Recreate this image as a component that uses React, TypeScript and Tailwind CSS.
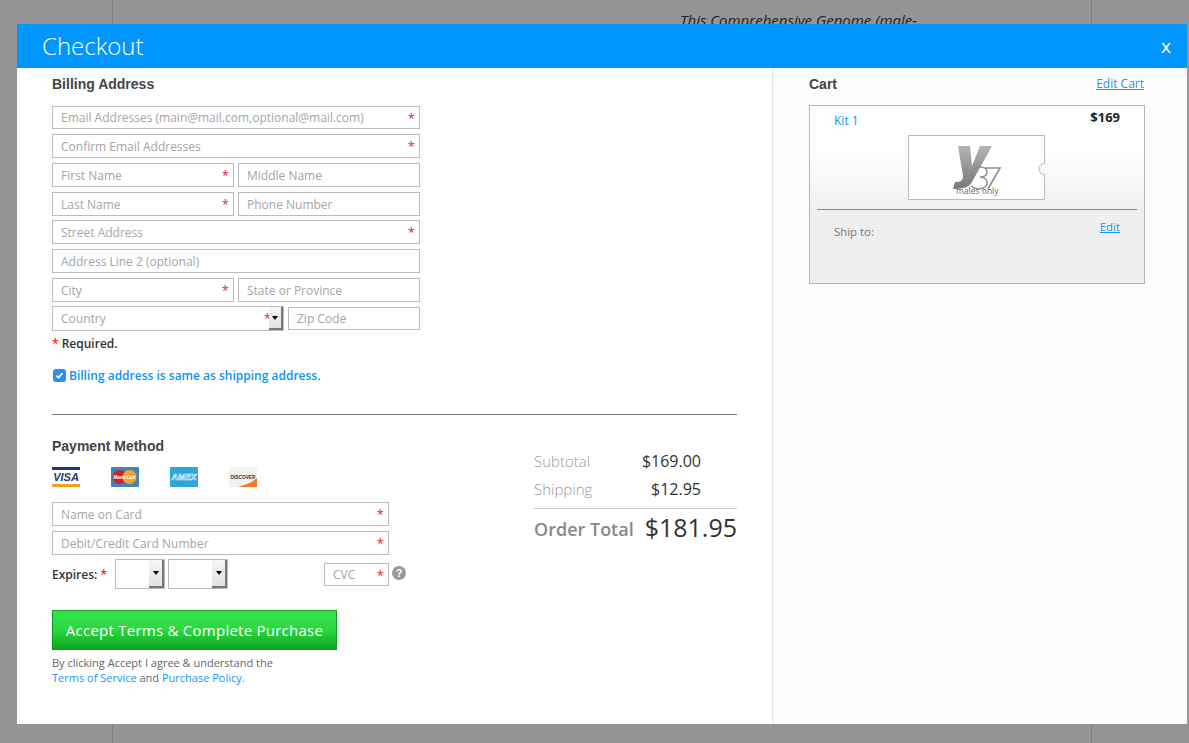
const Field = ({ label, required, className }: { label: string; required?: boolean; className: string }) => {
  return (
    <div className={`relative flex items-center bg-white border border-[#bbb] pl-2 pt-px text-[12px] text-[#a5a5a5] ${className}`}>
      <span className="whitespace-nowrap">{label}</span>
      {required && <span className="absolute right-[4px] top-[2px] text-[13px] leading-[18px] text-[#f02030]">*</span>}
    </div>
  );
};

const SelectArrow = ({ className }: { className: string }) => {
  return (
    <div className={`flex items-center justify-center bg-gradient-to-b from-[#f6f6f6] to-[#e2e2e2] border-r-2 border-b-2 border-[#777] ${className}`}>
      <div className="w-0 h-0 border-x-[3px] border-x-transparent border-t-[4px] border-t-black" />
    </div>
  );
};

const CardIcons = () => {
  return (
    <div className="flex gap-[31px] mt-[13px]">
      <svg width="28" height="20" viewBox="0 0 28 20">
        <rect width="28" height="20" fill="#fff" />
        <rect width="28" height="3" fill="#22347f" />
        <rect y="17" width="28" height="3" fill="#f0a01e" />
        <text x="14" y="14" textAnchor="middle" fontFamily="Liberation Sans" fontSize="11" fontWeight="700" fontStyle="italic" fill="#22347f">VISA</text>
      </svg>
      <svg width="28" height="20" viewBox="0 0 28 20">
        <rect width="28" height="20" rx="1" fill="#3f86b5" />
        <circle cx="8.5" cy="10" r="7" fill="#cf2030" />
        <circle cx="18.5" cy="10" r="7" fill="#f2a42c" />
        <text x="13.5" y="11.5" textAnchor="middle" textLength="22" lengthAdjust="spacingAndGlyphs" fontFamily="Liberation Sans" fontSize="4.6" fontWeight="700" fontStyle="italic" fill="#fff">MasterCard</text>
      </svg>
      <svg width="28" height="20" viewBox="0 0 28 20">
        <rect width="28" height="20" rx="1" fill="#2fa5d8" />
        <text x="14" y="13" textAnchor="middle" textLength="25" lengthAdjust="spacingAndGlyphs" fontFamily="Liberation Sans" fontSize="9" fontWeight="700" fontStyle="italic" fill="#2fa5d8" stroke="#fff" strokeWidth="0.5">AMEX</text>
      </svg>
      <svg width="28" height="20" viewBox="0 0 28 20">
        <rect width="28" height="20" fill="#f2f2f2" />
        <path d="M9 20 C16 18 24 15 28 11 V20 Z" fill="#f07a26" />
        <text x="14" y="12" textAnchor="middle" textLength="25" lengthAdjust="spacingAndGlyphs" fontFamily="Liberation Sans" fontSize="4.8" fontWeight="700" fill="#333">DISCOVER</text>
      </svg>
    </div>
  );
};

const Logo = () => {
  return (
    <div className="relative w-[137px] h-[65px] bg-white border border-[#bbb]">
      <svg className="absolute left-[43px] top-[8px]" width="56" height="48" viewBox="0 0 56 48">
        <defs>
          <linearGradient id="ygrad" x1="0" y1="0" x2="0" y2="1">
            <stop offset="0" stopColor="#b4b4b6" />
            <stop offset="1" stopColor="#77777a" />
          </linearGradient>
        </defs>
        <path d="M6 2 H18 L20 22 L28 2 H40 L20 38 C17 43 12 45 1 45 L3 38 C8 38 11 37 11 32 Z" fill="url(#ygrad)" />
        <path d="M33 24 H48 L36 45" fill="none" stroke="#8f8f92" strokeWidth="1.6" />
        <path d="M21 25 C25 22 35 22 35 28 C35 32 31 33 28 33 C33 33 36 36 35 40 C33 46 23 46 19 42" fill="none" stroke="#8f8f92" strokeWidth="1.5" />
      </svg>
      <span className="absolute left-[47px] top-[49px] text-[8.5px] leading-[12px] text-[#666]">males only</span>
      <svg className="absolute -right-px top-[26px]" width="7" height="14" viewBox="0 0 7 14">
        <path d="M7 1 A6 6 0 0 0 7 13 Z" fill="#f8f8f8" />
        <path d="M7 1 A6 6 0 0 0 7 13" fill="none" stroke="#bbb" />
      </svg>
    </div>
  );
};

const App = () => {
  return (
    <div className="relative w-full h-[743px] overflow-hidden bg-[#959595] font-['Open_Sans',sans-serif]">
      <div className="absolute left-[112px] top-0 w-px h-full bg-[#7f7f7f]" />
      <div className="absolute left-[1091px] top-0 w-px h-full bg-[#7f7f7f]" />
      <p className="absolute left-[680px] top-[9px] text-[15px] italic text-[#222]">This Comprehensive Genome (male-</p>

      <div className="absolute left-[17px] top-[24px] w-[1170px] h-[700px] bg-white flex flex-col">
        <div className="relative shrink-0 h-[44px] bg-[#0096ff] flex items-center justify-between pl-[25px] pr-[16px] text-white">
          <span className="text-[24px] font-light">Checkout</span>
          <span className="text-[19px] leading-none">x</span>
        </div>

        <div className="flex flex-1 min-h-0">
          <div className="w-[756px] pl-[35px] pr-[35px] border-r border-[#e4e4e4]">
            <h2 className="mt-[8px] text-[14px] leading-[16px] font-bold text-[#444] font-['Liberation_Sans',sans-serif]">Billing Address</h2>

            <div className="mt-[14px] w-[368px] flex flex-col gap-[5px]">
              <Field label="Email Addresses (main@mail.com,optional@mail.com)" required className="h-[23px]" />
              <Field label="Confirm Email Addresses" required className="h-[24px]" />
              <div className="flex gap-[4px]">
                <Field label="First Name" required className="w-[182px] h-[24px]" />
                <Field label="Middle Name" className="w-[182px] h-[24px]" />
              </div>
              <div className="flex gap-[4px] mb-[-1px]">
                <Field label="Last Name" required className="w-[182px] h-[24px]" />
                <Field label="Phone Number" className="w-[182px] h-[24px]" />
              </div>
              <Field label="Street Address" required className="h-[24px]" />
              <Field label="Address Line 2 (optional)" className="h-[24px]" />
              <div className="flex gap-[4px] mb-[-1px]">
                <Field label="City" required className="w-[182px] h-[24px]" />
                <Field label="State or Province" className="w-[182px] h-[24px]" />
              </div>
              <div className="flex gap-[4px] items-center">
                <div className="relative w-[232px] h-[25px] flex items-center bg-white border border-[#bbb] pl-2 pt-px text-[12px] text-[#a5a5a5]">
                  <span>Country</span>
                  <span className="absolute right-[12px] top-[2px] text-[13px] leading-[18px] text-[#f02030]">*</span>
                  <SelectArrow className="absolute right-0 top-0 w-[14px] h-full" />
                </div>
                <Field label="Zip Code" className="w-[132px] h-[23px]" />
              </div>
            </div>

            <p className="mt-[4px] text-[12px] leading-[17px] font-semibold text-[#333]"><span className="text-[#f02030]">*</span> Required.</p>

            <label className="mt-[15px] flex items-center gap-[3px] text-[12px] leading-[17px] font-semibold text-[#0a96f5]">
              <span className="w-[13px] h-[13px] ml-px rounded-[3px] bg-[#2f8fee] flex items-center justify-center">
                <svg width="9" height="9" viewBox="0 0 9 9"><path d="M1.5 4.6 L3.6 6.8 L7.5 2" fill="none" stroke="#fff" strokeWidth="1.6" /></svg>
              </span>
              Billing address is same as shipping address.
            </label>

            <hr className="mt-[30px] border-0 h-px bg-[#777]" />

            <div className="flex">
              <div className="w-[337px]">
                <h2 className="mt-[23px] text-[14px] leading-[16px] font-bold text-[#444] font-['Liberation_Sans',sans-serif]">Payment Method</h2>
                <CardIcons />
                <div className="mt-[15px] flex flex-col gap-[5px]">
                  <Field label="Name on Card" required className="h-[24px]" />
                  <Field label="Debit/Credit Card Number" required className="h-[24px]" />
                </div>
                <div className="mt-[4px] flex items-center h-[30px] relative">
                  <span className="pt-[2px] text-[12px] font-semibold text-[#333] whitespace-nowrap">Expires: <span className="text-[#f02030]">*</span></span>
                  <div className="relative ml-[8px] w-[50px] h-[30px] bg-white border border-[#bbb]">
                    <SelectArrow className="absolute right-0 top-0 w-[15px] h-full" />
                  </div>
                  <div className="relative ml-[3px] w-[60px] h-[30px] bg-white border border-[#bbb]">
                    <SelectArrow className="absolute right-0 top-0 w-[15px] h-full" />
                  </div>
                  <Field label="CVC" required className="ml-[96px] w-[65px] h-[23px]" />
                  <svg className="absolute left-[340px] top-[7px]" width="14" height="14" viewBox="0 0 14 14">
                    <circle cx="7" cy="7" r="7" fill="#999" />
                    <text x="7" y="11" textAnchor="middle" fontFamily="Liberation Sans" fontSize="11" fontWeight="700" fill="#fff">?</text>
                  </svg>
                </div>
                <button className="mt-[21px] w-[285px] h-[40px] bg-gradient-to-b from-[#34e24a] via-[#2ad83f] to-[#0ea51d] border border-[#129a22] text-[15px] font-medium tracking-[0.25px] text-white">
                  Accept Terms &amp; Complete Purchase
                </button>
                <p className="mt-[5px] text-[11px] leading-[15px] text-[#666] whitespace-nowrap">
                  By clicking Accept I agree &amp; understand the
                  <br />
                  <span className="text-[#1a96f0]">Terms of Service</span> and <span className="text-[#1a96f0]">Purchase Policy.</span>
                </p>
              </div>

              <div className="ml-[145px] w-[203px] mt-[35px]">
                <div className="flex justify-between items-center h-[22px] pr-[36px]">
                  <span className="text-[15px] font-light text-[#999]">Subtotal</span>
                  <span className="text-[16px] text-[#333]">$169.00</span>
                </div>
                <div className="mt-[6px] flex justify-between items-center h-[22px] pr-[36px]">
                  <span className="text-[15px] font-light text-[#999]">Shipping</span>
                  <span className="text-[16px] text-[#333]">$12.95</span>
                </div>
                <div className="mt-[8px] border-t border-[#ccc] h-[40px] flex justify-between items-center">
                  <span className="mt-[1px] text-[18px] font-semibold text-[#888] whitespace-nowrap">Order Total</span>
                  <span className="mb-[2px] text-[25px] leading-none text-[#333]">$181.95</span>
                </div>
              </div>
            </div>
          </div>

          <div className="flex-1 bg-[#fdfdfd] pl-[36px] pr-[42px]">
            <div className="mt-[8px] flex justify-between items-center h-[16px]">
              <span className="text-[14px] font-bold text-[#444] font-['Liberation_Sans',sans-serif]">Cart</span>
              <span className="text-[12px] underline text-[#1a96f0] mr-px">Edit Cart</span>
            </div>
            <div className="mt-[13px] h-[179px] border border-[#b5b5b5] bg-gradient-to-b from-white from-[25%] to-[#efefef] to-[60%] px-[7px]">
              <div className="flex justify-between pl-[17px] pr-[17px] h-[29px]">
                <span className="mt-[6px] text-[12px] leading-[18px] text-[#0a96f5]">Kit 1</span>
                <span className="mt-[2px] text-[13px] leading-[18px] font-bold text-[#222]">$169</span>
              </div>
              <div className="flex justify-center pr-[1px]">
                <Logo />
              </div>
              <hr className="mt-[9px] border-0 h-px bg-[#888]" />
              <div className="flex justify-between pl-[17px] pr-[17px]">
                <span className="mt-[13px] text-[11.4px] leading-[18px] text-[#777]">Ship to:</span>
                <span className="mt-[8px] text-[11.4px] leading-[18px] underline text-[#1a96f0]">Edit</span>
              </div>
            </div>
          </div>
        </div>
      </div>
    </div>
  );
};

export default App;
